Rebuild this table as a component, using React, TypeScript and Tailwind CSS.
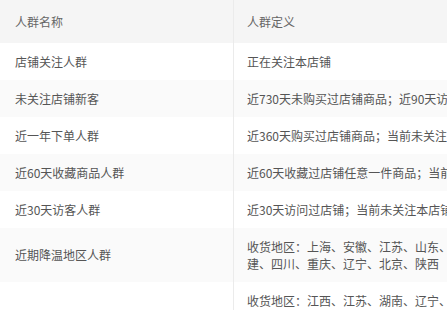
import React from "react";

type Row = { name: string; def: string[]; gray?: boolean };

const rows: Row[] = [
  { name: "店铺关注人群", def: ["正在关注本店铺"] },
  { name: "未关注店铺新客", def: ["近730天未购买过店铺商品；近90天访问过店铺；当前未关注本店铺"], gray: true },
  { name: "近一年下单人群", def: ["近360天购买过店铺商品；当前未关注本店铺"] },
  { name: "近60天收藏商品人群", def: ["近60天收藏过店铺任意一件商品；当前未关注本店铺"], gray: true },
  { name: "近30天访客人群", def: ["近30天访问过店铺；当前未关注本店铺"] },
  {
    name: "近期降温地区人群",
    def: ["收货地区：上海、安徽、江苏、山东、浙江、福", "建、四川、重庆、辽宁、北京、陕西"],
    gray: true,
  },
  {
    name: "近期升温地区人群",
    def: ["收货地区：江西、江苏、湖南、辽宁、广东、广", "西、海南、云南、贵州、四川、重庆", "福建"],
  },
];

export default function App() {
  return (
    <div
      className="w-[447px] h-[310px] overflow-hidden bg-white text-[12px]"
      style={{ fontFamily: '"Noto Sans CJK SC", "Noto Sans", sans-serif' }}
    >
      <div className="flex h-[43px] bg-[#f5f5f5] text-[#666]">
        <div className="w-[234px] shrink-0 flex items-center pl-[15px] border-r border-[#ebebeb]">人群名称</div>
        <div className="flex-1 flex items-center pl-[13px] whitespace-nowrap">人群定义</div>
      </div>
      {rows.map((r, i) => (
        <div key={i} className={`flex text-[#555] ${r.gray ? "bg-[#fafafa]" : "bg-white"}`}>
          <div className="w-[234px] shrink-0 flex items-center pl-[15px] border-r border-[#ebebeb]">{r.name}</div>
          <div className="flex-1 min-w-0 py-[10px] pl-[13px] leading-[17px] whitespace-nowrap overflow-hidden">
            {r.def.map((l, j) => (
              <div key={j}>{l}</div>
            ))}
          </div>
        </div>
      ))}
    </div>
  );
}
